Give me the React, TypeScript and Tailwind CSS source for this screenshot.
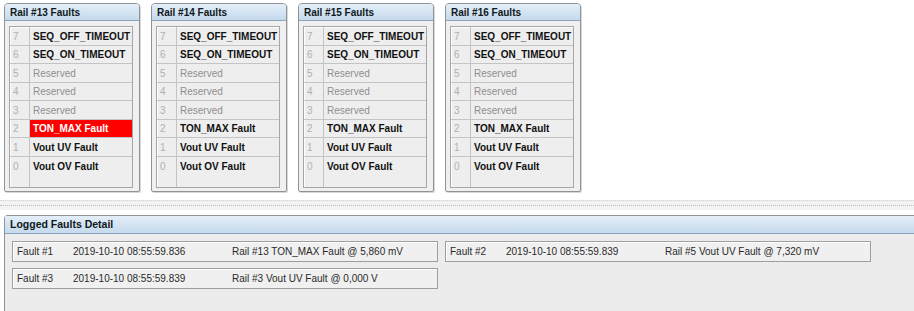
import React from "react";

type Row = { bit: number; label: string; kind: "bold" | "reserved" | "fault" };

const baseRows: Row[] = [
  { bit: 7, label: "SEQ_OFF_TIMEOUT", kind: "bold" },
  { bit: 6, label: "SEQ_ON_TIMEOUT", kind: "bold" },
  { bit: 5, label: "Reserved", kind: "reserved" },
  { bit: 4, label: "Reserved", kind: "reserved" },
  { bit: 3, label: "Reserved", kind: "reserved" },
  { bit: 2, label: "TON_MAX Fault", kind: "bold" },
  { bit: 1, label: "Vout UV Fault", kind: "bold" },
  { bit: 0, label: "Vout OV Fault", kind: "bold" },
];

const rowHeights = ["h-[19px]", "h-[18px]", "h-[19px]", "h-[18px]", "h-[19px]", "h-[18px]", "h-[19px]", "h-[18px]"];

function RailPanel({ rail, faultBit }: { rail: number; faultBit?: number }) {
  return (
    <div className="w-[136px] h-[189px] flex flex-col border border-[#8f9499] rounded-t-[4px] rounded-b-[2px] bg-[#f0f0f0] overflow-hidden shadow-[1px_1px_0_#d8d8d8]">
      <div className="h-[17px] shrink-0 flex items-center pl-[5px] bg-gradient-to-b from-[#e4eef8] to-[#c5daee] border-b border-[#8fa3b8] text-[10px] font-bold text-[#101820]">
        Rail #{rail} Faults
      </div>
      <div className="flex-1 pl-[4px] pr-[6px] pt-[5px] pb-[2px]">
        <div className="h-[162px] border border-[#a6a6a6] shadow-[inset_1px_1px_0_#ffffff] flex flex-col bg-[#eeeeee]">
          {baseRows.map((r, i) => {
            const isFault = r.bit === faultBit;
            const last = i === baseRows.length - 1;
            return (
              <div
                key={r.bit}
                className={`${rowHeights[i]} flex shrink-0 ${last ? "" : "border-b border-[#c4c4c4]"}`}
              >
                <div className="w-[20px] shrink-0 border-r border-[#c4c4c4] flex items-center pl-[3px] text-[10px] text-[#b0b0b0]">
                  {r.bit}
                </div>
                <div
                  className={`flex-1 flex items-center pl-[3px] text-[10px] ${
                    isFault
                      ? "bg-[#ff0000] text-white font-bold"
                      : r.kind === "reserved"
                      ? "text-[#8e8e8e]"
                      : "text-[#111111] font-bold"
                  }`}
                >
                  {r.label}
                </div>
              </div>
            );
          })}
          <div className="flex-1 flex">
            <div className="w-[20px] shrink-0 border-r border-[#c4c4c4]" />
            <div className="flex-1" />
          </div>
        </div>
      </div>
    </div>
  );
}

function FaultBox({ n, date, desc }: { n: number; date: string; desc: string }) {
  return (
    <div className="h-[21px] w-[426px] border border-[#9e9e9e] bg-[#f0f0f0] shadow-[inset_1px_1px_0_#ffffff] flex items-center pl-[4px] text-[10px] text-[#2a2a2a] whitespace-nowrap">
      <span className="w-[56px] shrink-0">Fault #{n}</span>
      <span className="w-[159px] shrink-0">{date}</span>
      <span>{desc}</span>
    </div>
  );
}

export default function App() {
  return (
    <div
      className="w-[914px] h-[311px] bg-white overflow-hidden flex flex-col"
      style={{ fontFamily: '"Liberation Sans", Arial, sans-serif' }}
    >
      <div className="flex gap-[11px] pl-[4px] pt-[3px]">
        <RailPanel rail={13} faultBit={2} />
        <RailPanel rail={14} />
        <RailPanel rail={15} />
        <RailPanel rail={16} />
      </div>

      <div className="mt-[8px] h-[10px] shrink-0 bg-[#f3f3f3] border-t border-[#e0e0e0] flex items-center">
        <div className="w-full border-t border-dotted border-[#bdbdbd]" />
      </div>

      <div className="mt-[5px] ml-[4px] flex-1 w-[920px] border-l border-t border-[#8f9499] rounded-tl-[4px] bg-[#ececec] flex flex-col">
        <div className="h-[18px] shrink-0 flex items-center pl-[5px] bg-gradient-to-b from-[#e4eef8] to-[#c5daee] border-b border-[#8fa3b8] text-[10.5px] font-bold text-[#101820]">
          Logged Faults Detail
        </div>
        <div className="pl-[7px] pt-[7px] grid grid-cols-[426px_426px] gap-x-[7px] gap-y-[6px] content-start">
          <FaultBox n={1} date="2019-10-10 08:55:59.836" desc="Rail #13 TON_MAX Fault @ 5,860 mV" />
          <FaultBox n={2} date="2019-10-10 08:55:59.839" desc="Rail #5 Vout UV Fault @ 7,320 mV" />
          <FaultBox n={3} date="2019-10-10 08:55:59.839" desc="Rail #3 Vout UV Fault @ 0,000 V" />
        </div>
      </div>
    </div>
  );
}
